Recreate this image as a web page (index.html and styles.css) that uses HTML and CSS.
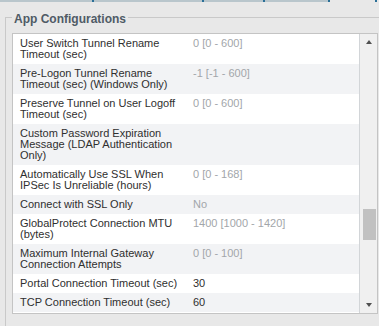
FILE: index.html
```html
<!DOCTYPE html>
<html lang="en">
<head>
    <meta charset="UTF-8">
    <meta name="viewport" content="width=device-width, initial-scale=1.0">
    <title>App Configurations</title>
    <link rel="stylesheet" href="styles.css">
</head>
<body>
    <div class="tabs">
        <span class="tab" style="width:92px"></span>
        <span class="tab" style="width:108px"></span>
        <span class="tab" style="width:59px"></span>
        <span class="tab" style="width:63px"></span>
        <span class="tab-gap"></span>
        <span class="tab-tick"></span>
    </div>

    <fieldset class="panel">
        <legend>App Configurations</legend>
        <div class="grid">
            <div class="grid-body">
                <table class="config">
                    <tr>
                        <td class="label">User Switch Tunnel Rename Timeout (sec)</td>
                        <td class="value muted">0 [0 - 600]</td>
                    </tr>
                    <tr>
                        <td class="label">Pre-Logon Tunnel Rename Timeout (sec) (Windows Only)</td>
                        <td class="value muted">-1 [-1 - 600]</td>
                    </tr>
                    <tr>
                        <td class="label">Preserve Tunnel on User Logoff Timeout (sec)</td>
                        <td class="value muted">0 [0 - 600]</td>
                    </tr>
                    <tr>
                        <td class="label">Custom Password Expiration Message (LDAP Authentication Only)</td>
                        <td class="value muted"></td>
                    </tr>
                    <tr>
                        <td class="label">Automatically Use SSL When IPSec Is Unreliable (hours)</td>
                        <td class="value muted">0 [0 - 168]</td>
                    </tr>
                    <tr>
                        <td class="label">Connect with SSL Only</td>
                        <td class="value muted">No</td>
                    </tr>
                    <tr>
                        <td class="label">GlobalProtect Connection MTU (bytes)</td>
                        <td class="value muted">1400 [1000 - 1420]</td>
                    </tr>
                    <tr>
                        <td class="label">Maximum Internal Gateway Connection Attempts</td>
                        <td class="value muted">0 [0 - 100]</td>
                    </tr>
                    <tr>
                        <td class="label">Portal Connection Timeout (sec)</td>
                        <td class="value">30</td>
                    </tr>
                    <tr>
                        <td class="label">TCP Connection Timeout (sec)</td>
                        <td class="value">60</td>
                    </tr>
                </table>
            </div>
            <div class="scrollbar">
                <div class="scroll-btn"><span class="arrow-up"></span></div>
                <div class="track"><div class="thumb"></div></div>
                <div class="scroll-btn"><span class="arrow-down"></span></div>
            </div>
        </div>
    </fieldset>
</body>
</html>
```

FILE: styles.css
```css
html, body {
    margin: 0;
    height: 100%;
    overflow: hidden;
}
body {
    font-family: "Liberation Sans", Arial, sans-serif;
    font-size: 11px;
    background-color: #e8e8e8;
    color: #2f2f2f;
}
.tabs {
    display: flex;
    height: 2px;
}
.tab {
    background-color: #b9c6cc;
    border-right: 2px solid #2a6f97;
}
.tab-gap {
    width: 45px;
}
.tab-tick {
    width: 2px;
    background-color: #2a6f97;
}
.panel {
    margin: 8px 0 0 5px;
    padding: 8px 6px 12px 6px;
    border: 1px solid #c9c9c9;
    border-right: none;
    border-bottom: none;
    min-width: 0;
}
.panel legend {
    padding: 3px 2px 0 2px;
    font-size: 12px;
    line-height: 12px;
    font-weight: bold;
    color: #4f5b66;
}
.grid {
    display: flex;
    width: 364px;
    height: 279px;
    border: 1px solid #c4c4c4;
    background: white;
}
.grid-body {
    flex: 1;
    overflow: hidden;
}
.config {
    width: 100%;
    border-collapse: collapse;
}
.config td {
    padding: 4px 8px;
    line-height: 11px;
    vertical-align: top;
}
.config tr:nth-child(even) {
    background-color: #f2f3f5;
}
.config .label {
    width: 165px;
    padding: 4px 0 4px 7px;
}
.muted {
    color: #a2a6aa;
}
.scrollbar {
    width: 17px;
    border-left: 1px solid #d2d5d8;
    background-color: #f0f0f0;
    display: flex;
    flex-direction: column;
}
.scroll-btn {
    height: 17px;
    display: flex;
    align-items: center;
    justify-content: center;
}
.arrow-up {
    border-left: 3.5px solid transparent;
    border-right: 3.5px solid transparent;
    border-bottom: 4px solid #505050;
    margin-top: -2px;
}
.arrow-down {
    border-left: 3.5px solid transparent;
    border-right: 3.5px solid transparent;
    border-top: 4px solid #505050;
    margin-top: 1px;
}
.track {
    flex: 1;
}
.thumb {
    margin: 158px 1px 0 3px;
    height: 31px;
    background-color: #c1c1c1;
}
```
